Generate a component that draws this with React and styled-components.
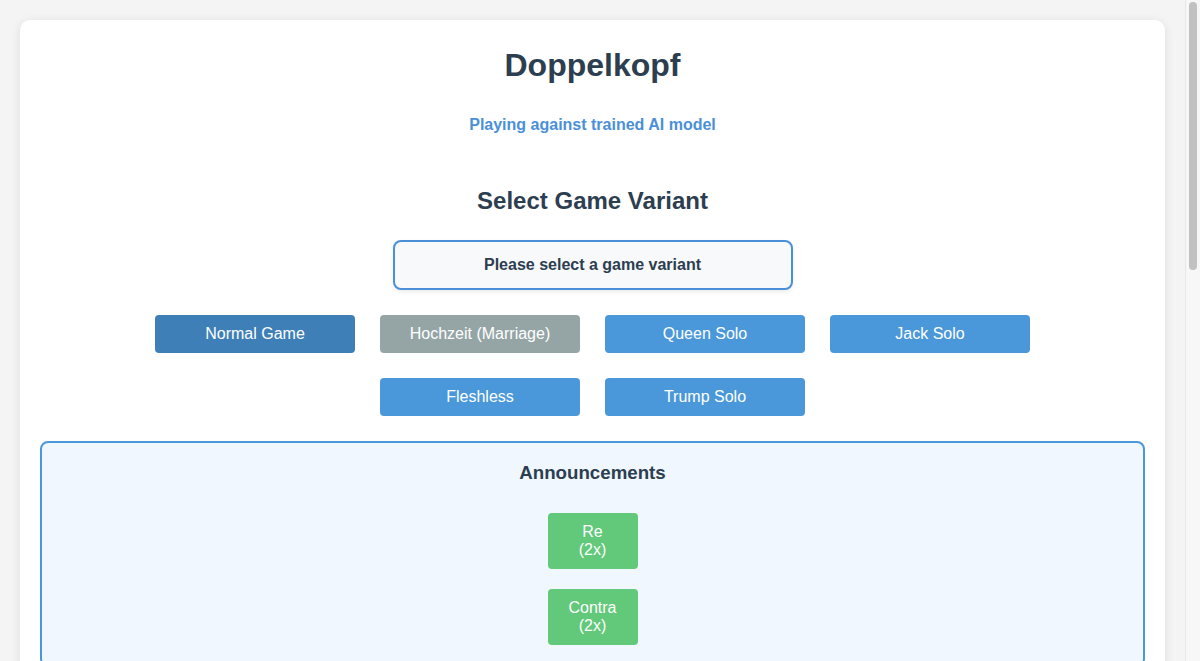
import React from 'react';
import styled, { createGlobalStyle } from 'styled-components';

const GlobalStyle = createGlobalStyle`
  body {
    margin: 0;
    padding: 20px 35px 20px 20px;
    background: #f4f4f4;
    font-family: "Liberation Sans", Arial, sans-serif;
    color: #2c3e50;
  }
`;

// stand-in for the browser's classic scrollbar seen in the screenshot
const ScrollTrack = styled.div`
  position: fixed;
  top: 0;
  right: 0;
  bottom: 0;
  width: 15px;
  box-sizing: border-box;
  background: #f7f7f7;
  border-left: 1px solid #e8e8e8;
  padding: 2px 3px 0 3px;
`;

const ScrollThumb = styled.div`
  height: 268px;
  border-radius: 4px;
  background: #c1c1c1;
`;

const Card = styled.div`
  background: #fff;
  border-radius: 10px;
  box-shadow: 0 2px 10px rgba(0, 0, 0, 0.1);
  padding: 20px 20px 900px;
  text-align: center;
`;

const Title = styled.h1`
  font-size: 32px;
  line-height: 38px;
  margin: 6px 0 0;
  color: #2c3e50;
`;

const Subtitle = styled.div`
  font-size: 16px;
  line-height: 18px;
  font-weight: 700;
  color: #4a90d9;
  margin-top: 32px;
`;

const SectionTitle = styled.h2`
  font-size: 24px;
  line-height: 28px;
  margin: 53px 0 0;
  color: #2c3e50;
`;

const Status = styled.div`
  width: 400px;
  height: 50px;
  box-sizing: border-box;
  margin: 25px auto 0;
  display: flex;
  align-items: center;
  justify-content: center;
  border: 2px solid #4a90d9;
  border-radius: 8px;
  background: #f8f9fa;
  box-shadow: 0 2px 4px rgba(0, 0, 0, 0.08);
  font-size: 16px;
  font-weight: 700;
`;

const VariantGrid = styled.div`
  display: flex;
  flex-wrap: wrap;
  justify-content: center;
  gap: 25px;
  max-width: 900px;
  margin: 25px auto 0;
`;

const VariantButton = styled.button`
  width: 200px;
  height: 38px;
  border: none;
  border-radius: 4px;
  font-family: inherit;
  font-size: 16px;
  color: #fff;
  cursor: pointer;
  background: ${p =>
    p.$selected ? '#3e7fb8' : p.$disabled ? '#95a5a6' : '#4a98da'};
`;

const AnnouncementBox = styled.div`
  margin-top: 25px;
  border: 2px solid #4a98da;
  border-radius: 8px;
  background: #f0f7ff;
  padding: 19px 20px 20px;
  display: flex;
  flex-direction: column;
  align-items: center;
`;

const BoxTitle = styled.h3`
  font-size: 18.72px;
  line-height: 22px;
  margin: 0 0 29px;
  color: #2c3e50;
`;

const AnnounceList = styled.div`
  display: flex;
  flex-direction: column;
  align-items: center;
  gap: 20px;
`;

const AnnounceButton = styled.button`
  width: 90px;
  height: 56px;
  border: none;
  border-radius: 4px;
  background: #62c87a;
  color: #fff;
  font-family: inherit;
  font-size: 16px;
  line-height: 18px;
  cursor: pointer;
`;

const variants = [
  { name: 'Normal Game', selected: true },
  { name: 'Hochzeit (Marriage)', disabled: true },
  { name: 'Queen Solo' },
  { name: 'Jack Solo' },
  { name: 'Fleshless' },
  { name: 'Trump Solo' },
];

export default function App() {
  return (
    <>
      <GlobalStyle />
      <Card>
        <Title>Doppelkopf</Title>
        <Subtitle>Playing against trained AI model</Subtitle>
        <SectionTitle>Select Game Variant</SectionTitle>
        <Status>Please select a game variant</Status>
        <VariantGrid>
          {variants.map(v => (
            <VariantButton key={v.name} $selected={v.selected} $disabled={v.disabled}>
              {v.name}
            </VariantButton>
          ))}
        </VariantGrid>
        <AnnouncementBox>
          <BoxTitle>Announcements</BoxTitle>
          <AnnounceList>
            <AnnounceButton>Re<br />(2x)</AnnounceButton>
            <AnnounceButton>Contra<br />(2x)</AnnounceButton>
          </AnnounceList>
        </AnnouncementBox>
      </Card>
      <ScrollTrack>
        <ScrollThumb />
      </ScrollTrack>
    </>
  );
}
